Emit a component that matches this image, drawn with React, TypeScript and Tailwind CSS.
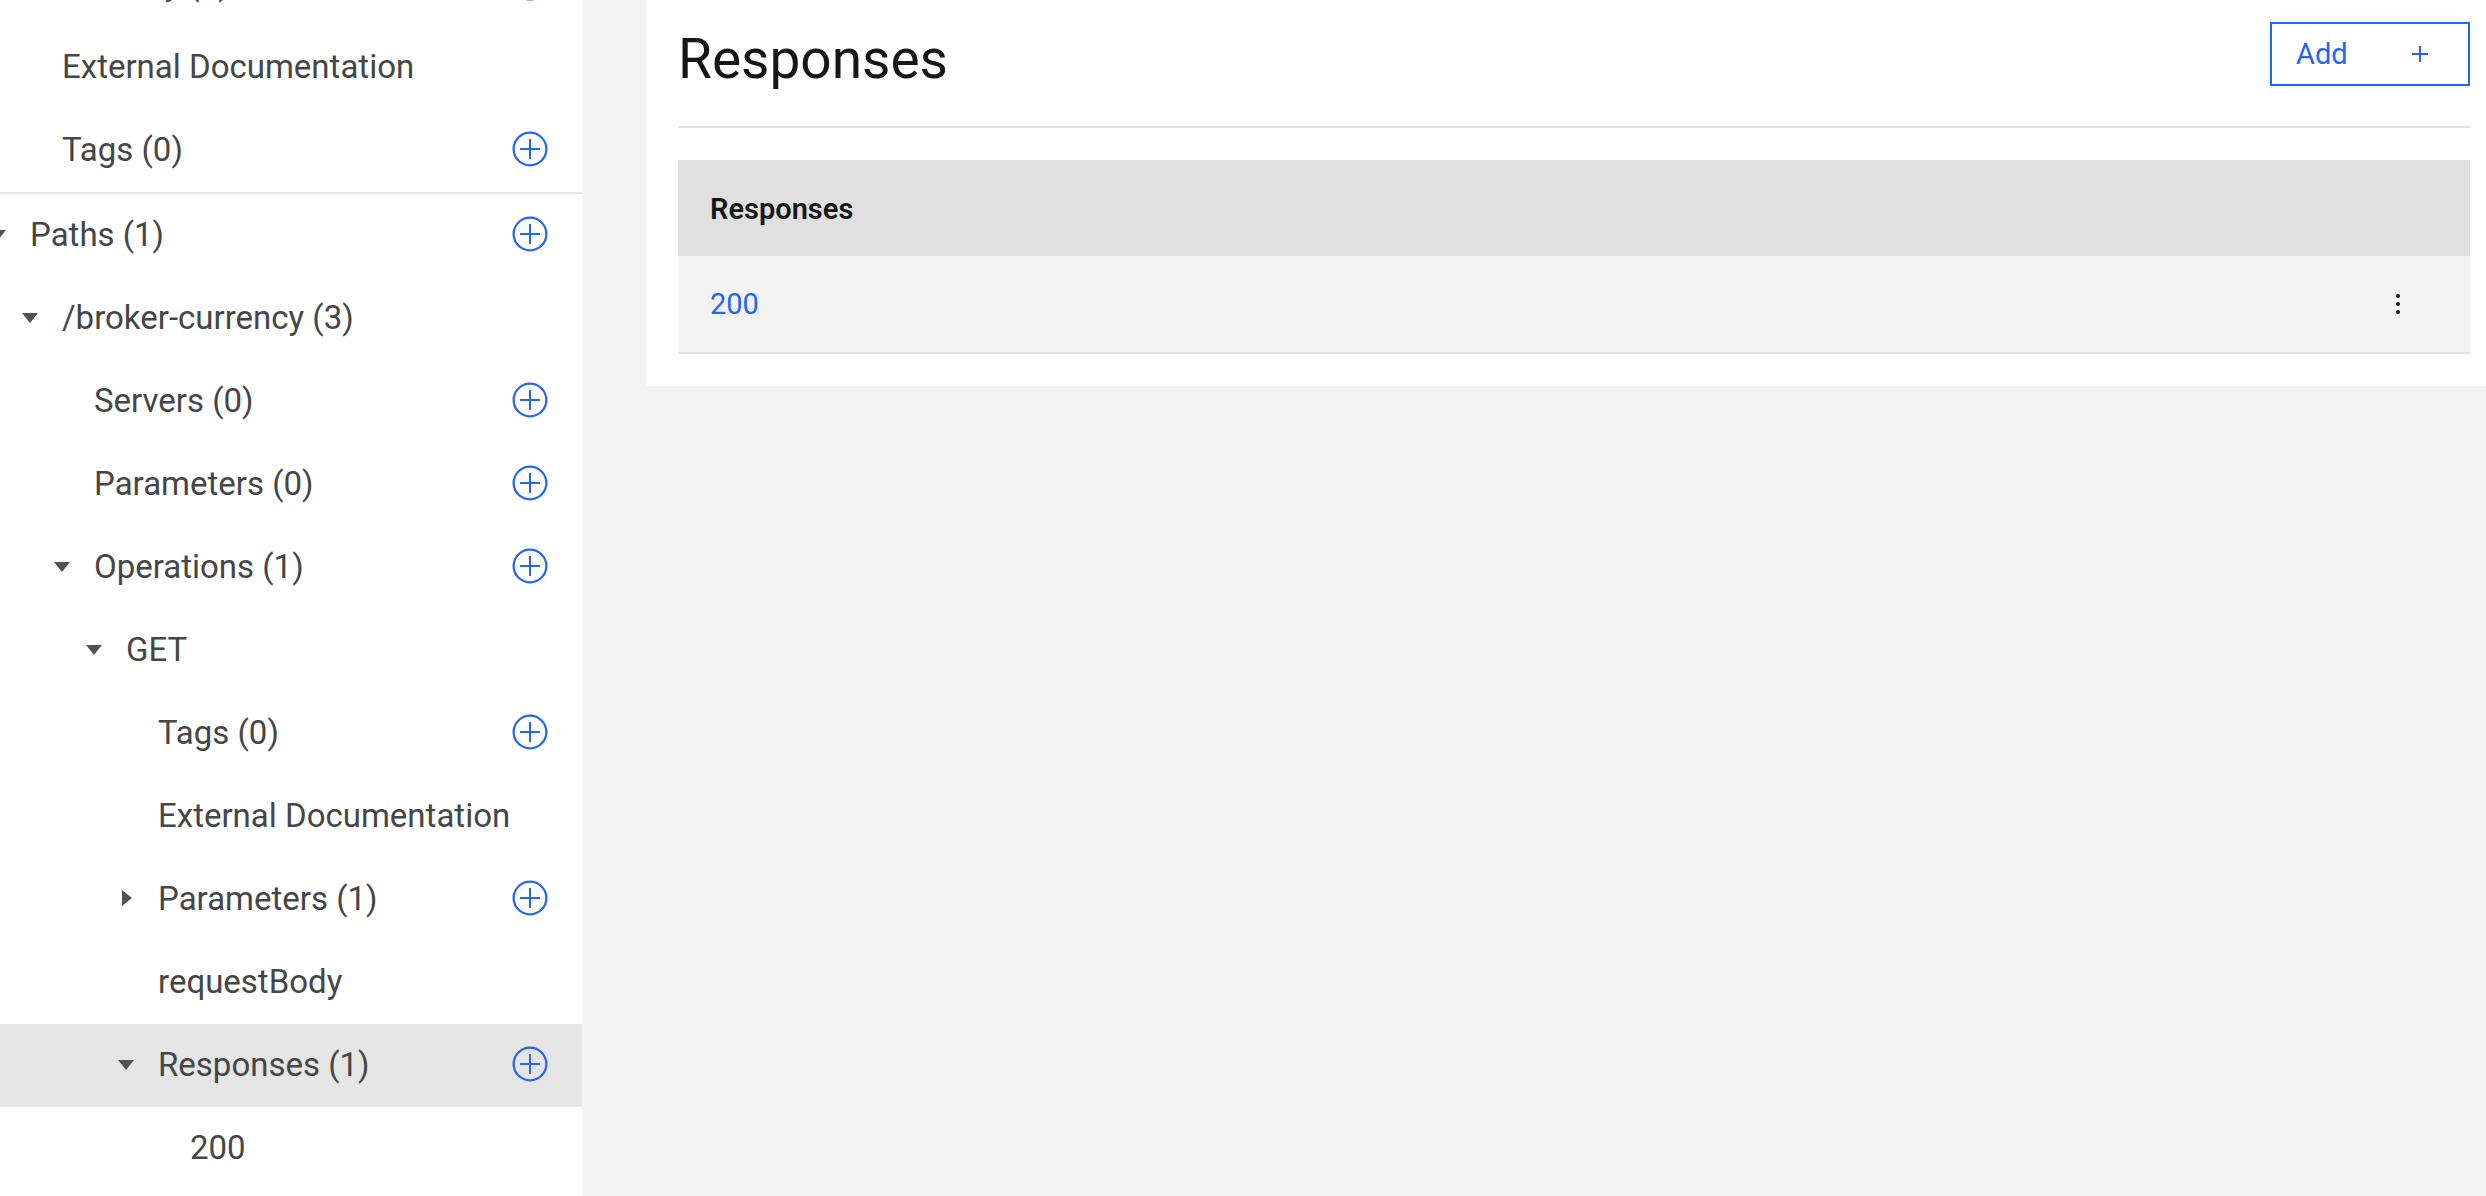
type NavItem = {
  label: string;
  indent: string;
  caret?: "down" | "right";
  add?: boolean;
  selected?: boolean;
};

const generalItems: NavItem[] = [
  { label: "Security (0)", indent: "pl-[62px]", add: true },
  { label: "External Documentation", indent: "pl-[62px]" },
  { label: "Tags (0)", indent: "pl-[62px]", add: true },
];

const pathItems: NavItem[] = [
  { label: "Paths (1)", indent: "pl-[30px]", caret: "down", add: true },
  { label: "/broker-currency (3)", indent: "pl-[62px]", caret: "down" },
  { label: "Servers (0)", indent: "pl-[94px]", add: true },
  { label: "Parameters (0)", indent: "pl-[94px]", add: true },
  { label: "Operations (1)", indent: "pl-[94px]", caret: "down", add: true },
  { label: "GET", indent: "pl-[126px]", caret: "down" },
  { label: "Tags (0)", indent: "pl-[158px]", add: true },
  { label: "External Documentation", indent: "pl-[158px]" },
  { label: "Parameters (1)", indent: "pl-[158px]", caret: "right", add: true },
  { label: "requestBody", indent: "pl-[158px]" },
  { label: "Responses (1)", indent: "pl-[158px]", caret: "down", add: true, selected: true },
  { label: "200", indent: "pl-[190px]" },
];

function Caret({ direction }: { direction: "down" | "right" }) {
  return (
    <svg viewBox="0 0 32 32" className="-ml-12 mr-4 size-8 shrink-0 fill-[#525252]" aria-hidden="true">
      <path d={direction === "down" ? "M24 12 16 22 8 12z" : "M12 8 22 16 12 24z"} />
    </svg>
  );
}

function AddIcon() {
  return (
    <svg viewBox="0 0 32 32" className="size-10" fill="none" stroke="#2465f6" aria-hidden="true">
      <circle cx="16" cy="16" r="13.1" strokeWidth="1.8" />
      <path d="M16 8v16M8 16h16" strokeWidth="1.6" />
    </svg>
  );
}

function NavRow({ item }: { item: NavItem }) {
  return (
    <li
      className={`flex h-[83px] items-center justify-between pr-8 pb-[3px] ${item.indent} ${
        item.selected ? "bg-[#e5e5e5]" : ""
      }`}
    >
      <button type="button" className="flex items-center whitespace-nowrap" aria-expanded={item.caret ? item.caret === "down" : undefined}>
        {item.caret && <Caret direction={item.caret} />}
        <span className="pt-0.5">{item.label}</span>
      </button>
      {item.add && (
        <button type="button" aria-label={`Add to ${item.label}`}>
          <AddIcon />
        </button>
      )}
    </li>
  );
}

export default function App() {
  return (
    <div className="flex h-screen overflow-hidden bg-[#f3f3f3] font-['Roboto',sans-serif] text-[#161616]">
      <nav aria-label="API outline" className="w-[582px] shrink-0 overflow-hidden bg-white text-[33px] leading-10 text-[#464646]">
        <ul className="-mt-[57px] border-b-2 border-[#e5e5e5]">
          {generalItems.map((item) => (
            <NavRow key={item.label} item={item} />
          ))}
        </ul>
        <ul>
          {pathItems.map((item) => (
            <NavRow key={item.indent + item.label} item={item} />
          ))}
        </ul>
      </nav>

      <main className="min-w-0 flex-1 pl-16">
        <section className="bg-white pr-4 pb-8 pl-8">
          <header className="flex h-32 items-start justify-between border-b-2 border-[#e0e0e0] pt-[22px]">
            <h1 className="text-[55px] leading-[74px]">Responses</h1>
            <button
              type="button"
              className="flex h-16 w-[200px] items-center justify-between border-2 border-[#2465f6] pr-8 pl-6 text-[29px] leading-9 text-[#2465f6]"
            >
              Add
              <svg viewBox="0 0 32 32" className="size-8 fill-current" aria-hidden="true">
                <path d="M17 15V8h-2v7H8v2h7v7h2v-7h7v-2z" />
              </svg>
            </button>
          </header>

          <table className="mt-8 w-full border-separate border-spacing-0 text-left text-[29px] leading-9">
            <thead>
              <tr className="h-24 bg-[#e0e0e0]">
                <th scope="col" className="px-8 pt-0.5 pb-0 font-semibold">Responses</th>
                <th scope="col" className="w-36" aria-label="Actions" />
              </tr>
            </thead>
            <tbody>
              <tr className="h-[98px] bg-[#f3f3f3]">
                <td className="border-b-2 border-[#e0e0e0] px-8">
                  <a href="#200" className="text-[#2465f6]">200</a>
                </td>
                <td className="border-b-2 border-[#e0e0e0]">
                  <button type="button" aria-label="Response options" className="mx-auto flex size-20 items-center justify-center">
                    <svg viewBox="0 0 32 32" className="size-8 fill-[#161616]" aria-hidden="true">
                      <circle cx="16" cy="8" r="2" />
                      <circle cx="16" cy="16" r="2" />
                      <circle cx="16" cy="24" r="2" />
                    </svg>
                  </button>
                </td>
              </tr>
            </tbody>
          </table>
        </section>
      </main>
    </div>
  );
}
